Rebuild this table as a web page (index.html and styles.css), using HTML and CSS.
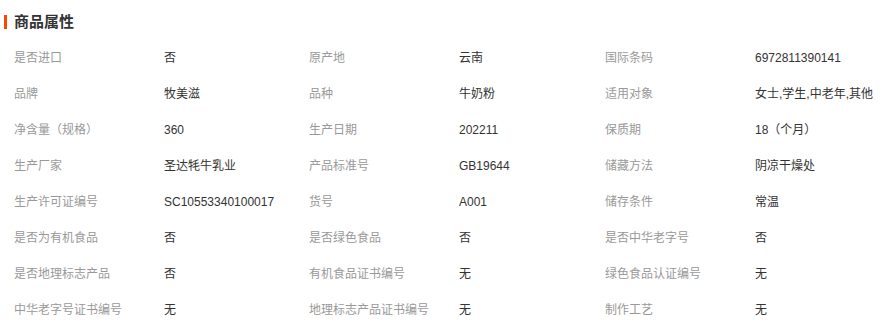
FILE: index.html
```html
<!DOCTYPE html>
<html lang="zh-CN">
<head>
<meta charset="utf-8">
<title>商品属性</title>
<link rel="stylesheet" href="styles.css">
</head>
<body>
<section class="attrs">
  <h2 class="attrs-title">商品属性</h2>
  <div class="attrs-grid">
    <span class="k">是否进口</span><span class="v">否</span>
    <span class="k">原产地</span><span class="v">云南</span>
    <span class="k">国际条码</span><span class="v">6972811390141</span>

    <span class="k">品牌</span><span class="v">牧美滋</span>
    <span class="k">品种</span><span class="v">牛奶粉</span>
    <span class="k">适用对象</span><span class="v">女士,学生,中老年,其他</span>

    <span class="k">净含量（规格）</span><span class="v">360</span>
    <span class="k">生产日期</span><span class="v">202211</span>
    <span class="k">保质期</span><span class="v">18（个月）</span>

    <span class="k">生产厂家</span><span class="v">圣达牦牛乳业</span>
    <span class="k">产品标准号</span><span class="v">GB19644</span>
    <span class="k">储藏方法</span><span class="v">阴凉干燥处</span>

    <span class="k">生产许可证编号</span><span class="v">SC10553340100017</span>
    <span class="k">货号</span><span class="v">A001</span>
    <span class="k">储存条件</span><span class="v">常温</span>

    <span class="k">是否为有机食品</span><span class="v">否</span>
    <span class="k">是否绿色食品</span><span class="v">否</span>
    <span class="k">是否中华老字号</span><span class="v">否</span>

    <span class="k">是否地理标志产品</span><span class="v">否</span>
    <span class="k">有机食品证书编号</span><span class="v">无</span>
    <span class="k">绿色食品认证编号</span><span class="v">无</span>

    <span class="k">中华老字号证书编号</span><span class="v">无</span>
    <span class="k">地理标志产品证书编号</span><span class="v">无</span>
    <span class="k">制作工艺</span><span class="v">无</span>
  </div>
</section>
</body>
</html>
```

FILE: styles.css
```css
html, body {
  margin: 0;
  padding: 0;
  background: #fff;
}
body {
  font-family: "Liberation Sans", "Noto Sans CJK SC", sans-serif;
  font-size: 12px;
  color: #333;
  overflow: hidden;
}
.attrs {
  padding: 13px 0 0 4px;
}
.attrs-title {
  display: flex;
  align-items: center;
  gap: 7px;
  margin: 0;
  height: 18px;
  line-height: 18px;
  font-size: 15px;
  font-weight: bold;
  color: #333;
}
.attrs-title::before {
  content: "";
  width: 3px;
  height: 14px;
  background: #ff4400;
}
.attrs-grid {
  display: grid;
  grid-template-columns: 150px 145px 150px 146px 150px 1fr;
  grid-auto-rows: 36px;
  align-items: baseline;
  margin: 9px 0 0 10px;
  line-height: 36px;
  white-space: nowrap;
}
.k {
  color: #999;
}
.v {
  color: #333;
}
```
